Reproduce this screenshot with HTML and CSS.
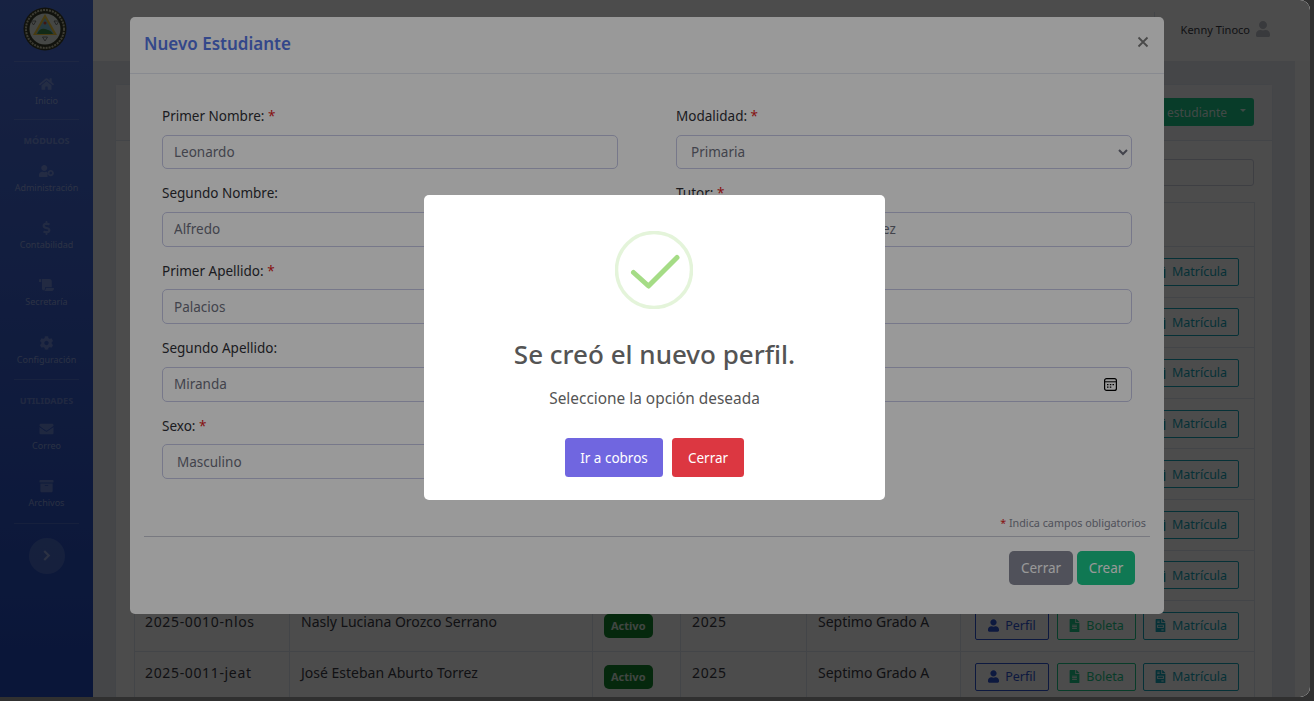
FILE: index.html
```html
<!DOCTYPE html>
<html lang="es">
<head>
<meta charset="utf-8">
<title>Nuevo Estudiante</title>
<link rel="stylesheet" href="styles.css">
</head>
<body>
<svg class="sprite" xmlns="http://www.w3.org/2000/svg">
  <symbol id="i-user" viewBox="0 0 448 512"><path d="M224 256c70.7 0 128-57.3 128-128S294.7 0 224 0 96 57.3 96 128s57.3 128 128 128zm89.6 32h-16.7c-22.2 10.2-46.9 16-72.9 16s-50.6-5.8-72.9-16h-16.7C60.2 288 0 348.2 0 422.4V464c0 26.5 21.5 48 48 48h352c26.5 0 48-21.5 48-48v-41.6c0-74.2-60.2-134.4-134.4-134.4z"/></symbol>
  <symbol id="i-home" viewBox="0 0 576 512"><path d="M280.37 148.26L96 300.11V464a16 16 0 0 0 16 16l112.06-.29a16 16 0 0 0 15.92-16V368a16 16 0 0 1 16-16h64a16 16 0 0 1 16 16v95.64a16 16 0 0 0 16 16.05L464 480a16 16 0 0 0 16-16V300L295.67 148.26a12.19 12.19 0 0 0-15.3 0zM571.6 251.47L488 182.56V44.05a12 12 0 0 0-12-12h-56a12 12 0 0 0-12 12v72.61L318.47 43a48 48 0 0 0-61 0L4.34 251.47a12 12 0 0 0-1.6 16.9l25.5 31A12 12 0 0 0 45.15 301l235.22-193.74a12.19 12.19 0 0 1 15.3 0L530.9 301a12 12 0 0 0 16.9-1.6l25.5-31a12 12 0 0 0-1.7-16.93z"/></symbol>
  <symbol id="i-usercog" viewBox="0 0 640 512"><path d="M224 256c70.7 0 128-57.3 128-128S294.7 0 224 0 96 57.3 96 128s57.3 128 128 128zm89.6 32h-16.7c-22.2 10.2-46.9 16-72.9 16s-50.6-5.8-72.9-16h-16.7C60.2 288 0 348.2 0 422.4V464c0 26.5 21.5 48 48 48h320c-10-24-14-70 0-128 6-24-20-96-54.4-96z"/><path fill-rule="evenodd" d="M500 208c-75 0-136 61-136 136s61 136 136 136 136-61 136-136-61-136-136-136zm0 80c31 0 56 25 56 56s-25 56-56 56-56-25-56-56 25-56 56-56z"/></symbol>
  <symbol id="i-dollar" viewBox="0 0 288 512"><path d="M209.2 233.4l-108-31.6C88.7 198.2 80 186.5 80 173.5c0-16.3 13.2-29.5 29.5-29.5h66.3c12.2 0 24.2 3.7 34.2 10.5 6.1 4.1 14.3 3.1 19.5-2l34.8-34c7.1-6.9 6.1-18.4-1.8-24.5C238 74.8 207.4 64.1 176 64V16c0-8.8-7.2-16-16-16h-32c-8.8 0-16 7.2-16 16v48h-2.5C45.8 64-5.4 118.7.5 183.6c4.2 46.1 39.4 83.6 83.8 96.6l102.5 30c12.5 3.7 21.2 15.3 21.2 28.3 0 16.3-13.2 29.5-29.5 29.5h-66.3C100 368 88 364.3 78 357.5c-6.1-4.1-14.3-3.1-19.5 2l-34.8 34c-7.1 6.9-6.1 18.4 1.8 24.5 24.5 19.2 55.1 29.9 86.5 30v48c0 8.8 7.2 16 16 16h32c8.8 0 16-7.2 16-16v-48.2c46.6-.9 90.3-28.6 105.7-72.7 21.5-61.6-14.6-124.8-72.5-141.7z"/></symbol>
  <symbol id="i-scroll" viewBox="0 0 640 512"><path d="M48 0C21.53 0 0 21.53 0 48v64c0 8.84 7.16 16 16 16h80V48C96 21.53 74.47 0 48 0zm208 412.57V352h288V96c0-52.94-43.06-96-96-96H111.59C121.74 13.41 128 29.92 128 48v368c0 38.87 34.65 69.65 74.75 63.12C234.22 474 256 444.46 256 412.57zM288 384v32c0 52.93-43.06 96-96 96h336c61.86 0 112-50.14 112-112 0-8.84-7.16-16-16-16H288z"/></symbol>
  <symbol id="i-cog" viewBox="0 0 512 512"><path d="M487.4 315.7l-42.6-24.6c4.3-23.2 4.3-47 0-70.2l42.6-24.6c4.9-2.8 7.1-8.6 5.5-14-11.1-35.6-30-67.8-54.7-94.6-3.8-4.1-10-5.1-14.8-2.3L380.8 110c-17.9-15.4-38.5-27.3-60.8-35.1V25.8c0-5.6-3.9-10.5-9.4-11.7-36.7-8.2-74.3-7.8-109.2 0-5.5 1.2-9.4 6.1-9.4 11.7V75c-22.2 7.9-42.8 19.8-60.8 35.1L88.7 85.5c-4.9-2.8-11-1.9-14.8 2.3-24.7 26.7-43.6 58.9-54.7 94.6-1.7 5.4.6 11.2 5.5 14L67.3 221c-4.3 23.2-4.3 47 0 70.2l-42.6 24.6c-4.9 2.8-7.1 8.6-5.5 14 11.1 35.6 30 67.8 54.7 94.6 3.8 4.1 10 5.1 14.8 2.3l42.6-24.6c17.9 15.4 38.5 27.3 60.8 35.1v49.2c0 5.6 3.9 10.5 9.4 11.7 36.7 8.2 74.3 7.8 109.2 0 5.5-1.2 9.4-6.1 9.4-11.7v-49.2c22.2-7.9 42.8-19.8 60.8-35.1l42.6 24.6c4.9 2.8 11 1.9 14.8-2.3 24.7-26.7 43.6-58.9 54.7-94.6 1.5-5.5-.7-11.3-5.6-14.1zM256 336c-44.1 0-80-35.9-80-80s35.9-80 80-80 80 35.9 80 80-35.9 80-80 80z"/></symbol>
  <symbol id="i-mail" viewBox="0 0 512 512"><path d="M502.3 190.8c3.9-3.1 9.7-.2 9.7 4.7V400c0 26.5-21.5 48-48 48H48c-26.5 0-48-21.5-48-48V195.6c0-5 5.7-7.8 9.7-4.7 22.4 17.4 52.1 39.5 154.1 113.6 21.1 15.4 56.7 47.8 92.2 47.6 35.7.3 72-32.8 92.3-47.6 102-74.1 131.6-96.3 154-113.7zM256 320c23.2.4 56.6-29.2 73.4-41.4 132.7-96.3 142.8-104.7 173.4-128.7 5.8-4.5 9.2-11.5 9.2-18.9v-19c0-26.5-21.5-48-48-48H48C21.5 64 0 85.5 0 112v19c0 7.4 3.4 14.3 9.2 18.9 30.6 23.9 40.7 32.4 173.4 128.7 16.8 12.2 50.2 41.8 73.4 41.4z"/></symbol>
  <symbol id="i-archive" viewBox="0 0 512 512"><path d="M32 448c0 17.7 14.3 32 32 32h384c17.7 0 32-14.3 32-32V160H32v288zm160-212c0-6.6 5.4-12 12-12h104c6.6 0 12 5.4 12 12v8c0 6.6-5.4 12-12 12H204c-6.6 0-12-5.4-12-12v-8zM480 32H32C14.3 32 0 46.3 0 64v48c0 8.8 7.2 16 16 16h480c8.8 0 16-7.2 16-16V64c0-17.7-14.3-32-32-32z"/></symbol>
  <symbol id="i-file" viewBox="0 0 384 512"><path d="M224 136V0H24C10.7 0 0 10.7 0 24v464c0 13.3 10.7 24 24 24h336c13.3 0 24-10.7 24-24V160H248c-13.2 0-24-10.8-24-24zm64 236c0 6.6-5.4 12-12 12H108c-6.6 0-12-5.4-12-12v-8c0-6.6 5.4-12 12-12h168c6.6 0 12 5.4 12 12v8zm0-64c0 6.6-5.4 12-12 12H108c-6.6 0-12-5.4-12-12v-8c0-6.6 5.4-12 12-12h168c6.6 0 12 5.4 12 12v8zm0-72v8c0 6.6-5.4 12-12 12H108c-6.6 0-12-5.4-12-12v-8c0-6.6 5.4-12 12-12h168c6.6 0 12 5.4 12 12zm96-114.1v6.1H256V0h6.1c6.4 0 12.5 2.5 17 7l97.9 98c4.5 4.5 7 10.6 7 16.9z"/></symbol>
  <symbol id="i-invoice" viewBox="0 0 384 512"><path d="M288 256H96v64h192v-64zm89-151L279.1 7c-4.5-4.5-10.6-7-17-7H256v128h128v-6.1c0-6.3-2.5-12.4-7-16.9zm-153 31V0H24C10.7 0 0 10.7 0 24v464c0 13.3 10.7 24 24 24h336c13.3 0 24-10.7 24-24V160H248c-13.2 0-24-10.8-24-24zM64 72c0-4.42 3.58-8 8-8h80c4.42 0 8 3.58 8 8v16c0 4.42-3.58 8-8 8H72c-4.42 0-8-3.58-8-8V72zm0 64c0-4.42 3.58-8 8-8h80c4.42 0 8 3.58 8 8v16c0 4.42-3.58 8-8 8H72c-4.42 0-8-3.58-8-8v-16zm256 304c0 4.42-3.58 8-8 8h-80c-4.42 0-8-3.58-8-8v-16c0-4.42 3.58-8 8-8h80c4.42 0 8 3.58 8 8v16zm0-200v96c0 8.84-7.16 16-16 16H80c-8.84 0-16-7.16-16-16v-96c0-8.84 7.16-16 16-16h224c8.84 0 16 7.16 16 16z"/></symbol>
</svg>
<div class="page">
  <aside class="sidebar">
    <div class="brand">
      <svg class="seal" viewBox="0 0 44 44">
        <circle cx="22" cy="22" r="21.5" fill="#3b3f2c"/>
        <circle cx="22" cy="22" r="19" fill="none" stroke="#c9c7a8" stroke-width="2" stroke-dasharray="2 1"/>
        <circle cx="22" cy="22" r="15.5" fill="#e6efe6"/>
        <path d="M22 7 34 28H10Z" fill="#f0c63a"/>
        <path d="M22 11 31 27H13Z" fill="#7fc4d8"/>
        <path d="M14 27c2-5 5-6 8-5s6 1 8 5Z" fill="#3f8f4c"/>
        <circle cx="22" cy="16" r="1.5" fill="#d24a3a"/>
        <path d="M8 14l5 0-2.500 4ZM31 14l5 0-2.500 4ZM19.500 30h5L22 34Z" fill="none" stroke="#666" stroke-width=".8"/>
      </svg>
    </div>
    <hr class="side-rule">
    <a class="nav-item nav-first"><svg class="nav-icon"><use href="#i-home"/></svg><span>Inicio</span></a>
    <hr class="side-rule">
    <div class="side-heading">MÓDULOS</div>
    <a class="nav-item"><svg class="nav-icon"><use href="#i-usercog"/></svg><span>Administración</span></a>
    <a class="nav-item"><svg class="nav-icon"><use href="#i-dollar"/></svg><span>Contabilidad</span></a>
    <a class="nav-item"><svg class="nav-icon"><use href="#i-scroll"/></svg><span>Secretaría</span></a>
    <a class="nav-item"><svg class="nav-icon"><use href="#i-cog"/></svg><span>Configuración</span></a>
    <hr class="side-rule">
    <div class="side-heading side-heading-util">UTILIDADES</div>
    <a class="nav-item"><svg class="nav-icon"><use href="#i-mail"/></svg><span>Correo</span></a>
    <a class="nav-item"><svg class="nav-icon"><use href="#i-archive"/></svg><span>Archivos</span></a>
    <hr class="side-rule">
    <button class="side-toggle" type="button"><svg viewBox="0 0 10 14"><path d="M2.500 2l5 5-5 5" fill="none" stroke="currentColor" stroke-width="2.400"/></svg></button>
  </aside>
  <div class="main">
    <header class="topbar">
      <span class="top-divider"></span>
      <span class="top-user">Kenny Tinoco</span>
      <svg class="top-icon"><use href="#i-user"/></svg>
    </header>
    <div class="content-row">
      <div class="content">
        <section class="card">
          <div class="card-head">
            <button class="btn-new" type="button">Nuevo estudiante<span class="caret"></span></button>
          </div>
          <div class="card-body">
            <div class="search-row"><input class="search" type="text" aria-label="Buscar"></div>
            <table class="table">
              <colgroup><col class="c-id"><col class="c-name"><col class="c-state"><col class="c-year"><col class="c-grade"><col class="c-act"></colgroup>
              <thead><tr><th></th><th></th><th></th><th></th><th></th><th></th></tr></thead>
              <tbody>
                <tr><td></td><td></td><td></td><td></td><td></td><td><div class="acts"><a class="act act-p"><svg><use href="#i-user"/></svg>Perfil</a><a class="act act-b"><svg><use href="#i-file"/></svg>Boleta</a><a class="act act-m"><svg><use href="#i-invoice"/></svg>Matrícula</a></div></td></tr>
                <tr><td></td><td></td><td></td><td></td><td></td><td><div class="acts"><a class="act act-p"><svg><use href="#i-user"/></svg>Perfil</a><a class="act act-b"><svg><use href="#i-file"/></svg>Boleta</a><a class="act act-m"><svg><use href="#i-invoice"/></svg>Matrícula</a></div></td></tr>
                <tr><td></td><td></td><td></td><td></td><td></td><td><div class="acts"><a class="act act-p"><svg><use href="#i-user"/></svg>Perfil</a><a class="act act-b"><svg><use href="#i-file"/></svg>Boleta</a><a class="act act-m"><svg><use href="#i-invoice"/></svg>Matrícula</a></div></td></tr>
                <tr><td></td><td></td><td></td><td></td><td></td><td><div class="acts"><a class="act act-p"><svg><use href="#i-user"/></svg>Perfil</a><a class="act act-b"><svg><use href="#i-file"/></svg>Boleta</a><a class="act act-m"><svg><use href="#i-invoice"/></svg>Matrícula</a></div></td></tr>
                <tr><td></td><td></td><td></td><td></td><td></td><td><div class="acts"><a class="act act-p"><svg><use href="#i-user"/></svg>Perfil</a><a class="act act-b"><svg><use href="#i-file"/></svg>Boleta</a><a class="act act-m"><svg><use href="#i-invoice"/></svg>Matrícula</a></div></td></tr>
                <tr><td></td><td></td><td></td><td></td><td></td><td><div class="acts"><a class="act act-p"><svg><use href="#i-user"/></svg>Perfil</a><a class="act act-b"><svg><use href="#i-file"/></svg>Boleta</a><a class="act act-m"><svg><use href="#i-invoice"/></svg>Matrícula</a></div></td></tr>
                <tr><td></td><td></td><td></td><td></td><td></td><td><div class="acts"><a class="act act-p"><svg><use href="#i-user"/></svg>Perfil</a><a class="act act-b"><svg><use href="#i-file"/></svg>Boleta</a><a class="act act-m"><svg><use href="#i-invoice"/></svg>Matrícula</a></div></td></tr>
                <tr><td class="num">2025-0010-nlos</td><td>Nasly Luciana Orozco Serrano</td><td><span class="badge">Activo</span></td><td class="num">2025</td><td>Septimo Grado A</td><td><div class="acts"><a class="act act-p"><svg><use href="#i-user"/></svg>Perfil</a><a class="act act-b"><svg><use href="#i-file"/></svg>Boleta</a><a class="act act-m"><svg><use href="#i-invoice"/></svg>Matrícula</a></div></td></tr>
                <tr><td class="num">2025-0011-jeat</td><td>José Esteban Aburto Torrez</td><td><span class="badge">Activo</span></td><td class="num">2025</td><td>Septimo Grado A</td><td><div class="acts"><a class="act act-p"><svg><use href="#i-user"/></svg>Perfil</a><a class="act act-b"><svg><use href="#i-file"/></svg>Boleta</a><a class="act act-m"><svg><use href="#i-invoice"/></svg>Matrícula</a></div></td></tr>
              </tbody>
            </table>
          </div>
        </section>
      </div>
      <div class="scrollbar"></div>
    </div>
  </div>

  <div class="backdrop"></div>

  <div class="modal">
    <div class="modal-head">
      <h2 class="modal-title">Nuevo Estudiante</h2>
      <button class="modal-close" type="button" aria-label="Cerrar"><svg viewBox="0 0 12 12"><path d="M1.500 1.500l9 9M10.500 1.500l-9 9" stroke="currentColor" stroke-width="1.800" fill="none"/></svg></button>
    </div>
    <div class="modal-body">
      <form class="form-grid">
        <div class="field"><label>Primer Nombre: <b class="req">*</b></label><input class="control" type="text" value="Leonardo"></div>
        <div class="field"><label>Modalidad: <b class="req">*</b></label><select class="control control-select"><option>Primaria</option></select></div>
        <div class="field"><label>Segundo Nombre:</label><input class="control" type="text" value="Alfredo"></div>
        <div class="field"><label>Tutor: <b class="req">*</b></label><input class="control control-tutor" type="text" value="ez"></div>
        <div class="field"><label>Primer Apellido: <b class="req">*</b></label><input class="control" type="text" value="Palacios"></div>
        <div class="field"><label>&nbsp;</label><input class="control" type="text"></div>
        <div class="field"><label>Segundo Apellido:</label><input class="control" type="text" value="Miranda"></div>
        <div class="field"><label>&nbsp;</label><input class="control control-date" type="date"></div>
        <div class="field"><label>Sexo: <b class="req">*</b></label><select class="control control-select"><option>Masculino</option></select></div>
      </form>
      <p class="note"><b class="req">*</b> Indica campos obligatorios</p>
    </div>
    <div class="modal-foot">
      <button class="btn btn-grey" type="button">Cerrar</button>
      <button class="btn btn-green" type="button">Crear</button>
    </div>
  </div>

  <div class="swal-backdrop">
    <div class="swal">
      <svg class="swal-icon" viewBox="0 0 78 78">
        <circle cx="39" cy="39" r="37.500" fill="none" stroke="#a5dc86" stroke-opacity=".3" stroke-width="3.500"/>
        <path d="M18.500 41.500 33.500 55 62 26.500" fill="none" stroke="#a5dc86" stroke-width="5" stroke-linecap="round" stroke-linejoin="round"/>
      </svg>
      <h2 class="swal-title">Se creó el nuevo perfil.</h2>
      <p class="swal-text">Seleccione la opción deseada</p>
      <div class="swal-actions">
        <button class="swal-btn swal-confirm" type="button">Ir a cobros</button>
        <button class="swal-btn swal-deny" type="button">Cerrar</button>
      </div>
    </div>
  </div>
</div>
</body>
</html>
```
FILE: styles.css
```css
* { box-sizing: border-box; }
html, body { margin: 0; height: 100%; }
body {
  background: #303030;
  font-family: "Noto Sans", "Open Sans", sans-serif;
  font-size: 14px;
  color: #3a3b45;
  overflow: hidden;
}
.sprite { display: none; }
.page {
  position: relative;
  display: flex;
  width: 1310px;
  height: 697px;
  overflow: hidden;
  background: #fff;
  border-radius: 0 10px 10px 0;
}

/* Sidebar */
.sidebar {
  flex: 0 0 93px;
  display: flex;
  flex-direction: column;
  align-items: center;
  background: linear-gradient(180deg, #4e73df 0%, #224abe 100%);
  color: rgba(255, 255, 255, .5);
}
.brand { flex: none; height: 61px; display: flex; align-items: center; justify-content: center; padding: 0 3px 3px 0; }
.seal { width: 44px; height: 44px; display: block; }
.side-rule {
  width: 65px;
  height: 1px;
  margin: 0;
  border: 0;
  background: rgba(255, 255, 255, .15);
  flex: none;
}
.nav-item {
  flex: none;
  height: 57.200px;
  width: 100%;
  display: flex;
  flex-direction: column;
  align-items: center;
  padding-top: 14px;
  font-size: 9px;
  line-height: 13px;
  color: rgba(255, 255, 255, .45);
}
.nav-first { height: 57px; padding-top: 15px; }
.nav-icon { width: 15px; height: 14px; margin-bottom: 3px; fill: rgba(255, 255, 255, .28); }
.side-heading {
  flex: none;
  height: 30px;
  padding-top: 14px;
  font-size: 9px;
  font-weight: 700;
  line-height: 14px;
  color: rgba(255, 255, 255, .3);
}
.side-heading-util { height: 28.500px; }
.side-toggle {
  flex: none;
  width: 36px;
  height: 36px;
  margin-top: 14px;
  padding: 0;
  display: flex;
  align-items: center;
  justify-content: center;
  border: 0;
  border-radius: 50%;
  background: rgba(255, 255, 255, .16);
  color: rgba(255, 255, 255, .4);
}
.side-toggle svg { width: 9px; height: 13px; }

/* Main */
.main { flex: 1; min-width: 0; display: flex; flex-direction: column; }
.topbar {
  flex: 0 0 61px;
  display: flex;
  align-items: center;
  justify-content: flex-end;
  padding: 0 40px 3px 0;
  background: #fff;
  position: relative;
}
.top-divider { position: absolute; left: 1061px; top: 12px; width: 1px; height: 38px; background: #e3e6f0; }
.top-user { font-size: 11px; color: #3a3b45; }
.top-icon { width: 14px; height: 16px; margin-left: 6px; fill: #c0c2cc; }
.content-row { flex: 1; min-height: 0; display: flex; }
.content { flex: 1; min-width: 0; padding: 23px 22px 0; background: #e8eaf3; overflow: hidden; }
.scrollbar { flex: 0 0 15px; background: #fbfbfb; }
.card { background: #fff; border-radius: 5px 5px 0 0; border: 1px solid #e3e6f0; border-bottom: 0; height: 640px; }
.card-head {
  height: 56px;
  display: flex;
  justify-content: flex-end;
  align-items: flex-start;
  padding: 13px 18px 0;
  background: #f8f9fc;
  border-bottom: 1px solid #e3e6f0;
}
.btn-new {
  height: 28px;
  padding: 0 8px 0 10px;
  display: flex;
  align-items: center;
  border: 0;
  border-radius: 3px;
  background: #1cc88a;
  color: rgba(255, 255, 255, .85);
  font: inherit;
  font-size: 12px;
}
.caret { margin-left: 13px; margin-top: -4px; border: 3px solid transparent; border-top-color: rgba(255, 255, 255, .8); border-bottom: 0; }
.card-body { padding: 18px 18px 0; }
.search-row { display: flex; justify-content: flex-end; margin-bottom: 16px; }
.search { width: 300px; height: 27px; border: 1px solid #d1d3e2; border-radius: 3px; background: #fff; }
.table { width: 1120px; table-layout: fixed; border-collapse: collapse; font-size: 14px; }
.c-id { width: 155px; }
.c-name { width: 303px; }
.c-state { width: 88px; }
.c-year { width: 126px; }
.c-grade { width: 154px; }
.c-act { width: 294px; }
.table th { height: 44px; border: 1px solid #e3e6f0; }
.table td {
  height: 50.600px;
  padding: 0 11px 9px;
  border: 1px solid #e3e6f0;
  vertical-align: middle;
  color: #3a3b45;
  white-space: nowrap;
}
.table td:first-child { padding-left: 10px; }
.table td.num { letter-spacing: .65px; }
.table td:last-child { padding: 0 14px; }
.badge {
  display: inline-flex;
  align-items: center;
  height: 24px;
  padding: 0 7px;
  margin-top: 9px;
  border-radius: 5px;
  background: #13872c;
  color: rgba(255, 255, 255, .85);
  font-size: 11px;
  font-weight: 700;
}
.acts { display: flex; gap: 8px; }
.act {
  height: 28px;
  display: flex;
  align-items: center;
  justify-content: center;
  gap: 6px;
  border: 1px solid currentColor;
  border-radius: 2px;
  font-size: 12.500px;
}
.act svg { width: 11px; height: 13px; fill: currentColor; }
.act-p { width: 74px; color: #2f55d4; }
.act-b { width: 79px; color: #1cc88a; }
.act-m { width: 96px; margin-left: -1px; color: #16a5b8; }

/* Overlays */
.backdrop { position: absolute; inset: 0; background: rgba(0, 0, 0, .5); }
.modal {
  position: absolute;
  left: 130px;
  top: 17px;
  width: 1034px;
  height: 597px;
  display: flex;
  flex-direction: column;
  background: #fff;
  border-radius: 5px;
}
.modal-head {
  flex: 0 0 57px;
  display: flex;
  align-items: center;
  justify-content: space-between;
  padding: 0 14px 3px;
  border-bottom: 1px solid #e3e6f0;
}
.modal-title { margin: 0; font-size: 17px; font-weight: 600; color: #5577e6; }
.modal-close { width: 12px; height: 12px; padding: 0; border: 0; background: none; color: #7b7b7b; margin-right: 1px; margin-top: -3px; }
.modal-close svg { display: block; width: 12px; height: 12px; }
.modal-body { flex: 1; padding: 31px 14px 0; }
.form-grid {
  display: grid;
  grid-template-columns: 456px 456px;
  column-gap: 58px;
  row-gap: 13px;
  padding: 0 18px;
}
.field { display: flex; flex-direction: column; }
.field label { height: 21.600px; margin-bottom: 8px; line-height: 23.600px; font-size: 13.500px; color: #2f3036; }
.req { font-weight: 400; color: #e02020; }
.control {
  height: 34.800px;
  width: 100%;
  padding: 0 11px;
  border: 1px solid #c6c9e6;
  border-radius: 5px;
  background: #fff;
  font: inherit;
  font-size: 13.500px;
  color: #6e707e;
}
.control-select { padding-left: 10px; }
.control-tutor { padding-left: 205px; }
.control-date::-webkit-calendar-picker-indicator {
  width: 13px;
  height: 13px;
  margin: 0 3px 0 0;
  padding: 0;
  background: url("data:image/svg+xml,%3Csvg xmlns='http://www.w3.org/2000/svg' viewBox='0 0 13 13'%3E%3Crect x='.6' y='.6' width='11.8' height='11.800' rx='2' fill='none' stroke='%23000' stroke-width='1.200'/%3E%3Cpath d='M1 3.800h11' stroke='%23000'/%3E%3Cpath d='M3 6h1.500v1.300H3zM5.800 6h1.500v1.300H5.800zM8.500 6H10v1.300H8.500zM3 8.500h1.500v1.300H3zM5.800 8.500h1.500v1.300H5.800z'/%3E%3C/svg%3E") no-repeat center / contain;
}
.note { margin: 36.500px 4px 0 0; text-align: right; font-size: 10.800px; line-height: 15px; color: #858796; }
.modal-foot {
  margin: 0 14px;
  padding: 14px 15px 29px;
  display: flex;
  justify-content: flex-end;
  gap: 4px;
  border-top: 1px solid #c8cad6;
}
.btn { height: 34px; border: 0; border-radius: 5px; color: #fff; font: inherit; font-size: 13.500px; }
.btn-grey { width: 64px; background: #858796; }
.btn-green { width: 58px; background: #1cc88a; }

.swal-backdrop {
  position: absolute;
  inset: 0;
  display: flex;
  align-items: center;
  justify-content: center;
  padding: 0 1px 2px 0;
  background: rgba(0, 0, 0, .4);
}
.swal {
  width: 461px;
  height: 305px;
  padding-top: 36px;
  display: flex;
  flex-direction: column;
  align-items: center;
  background: #fff;
  border-radius: 5px;
}
.swal-icon { width: 78px; height: 78px; flex: none; margin-right: 1px; }
.swal-title { margin: 26px 0 0; font-size: 26px; line-height: 38px; font-weight: 500; color: #545454; }
.swal-text { margin: 16px 0 0; font-size: 15.400px; line-height: 20px; color: #545454; }
.swal-actions { margin-top: 29px; display: flex; gap: 9px; }
.swal-btn { height: 39px; border: 0; border-radius: 3.500px; color: #fff; font: inherit; font-size: 13.500px; }
.swal-confirm { width: 98px; background: #7066e0; }
.swal-deny { width: 72px; background: #dc3741; }
```
